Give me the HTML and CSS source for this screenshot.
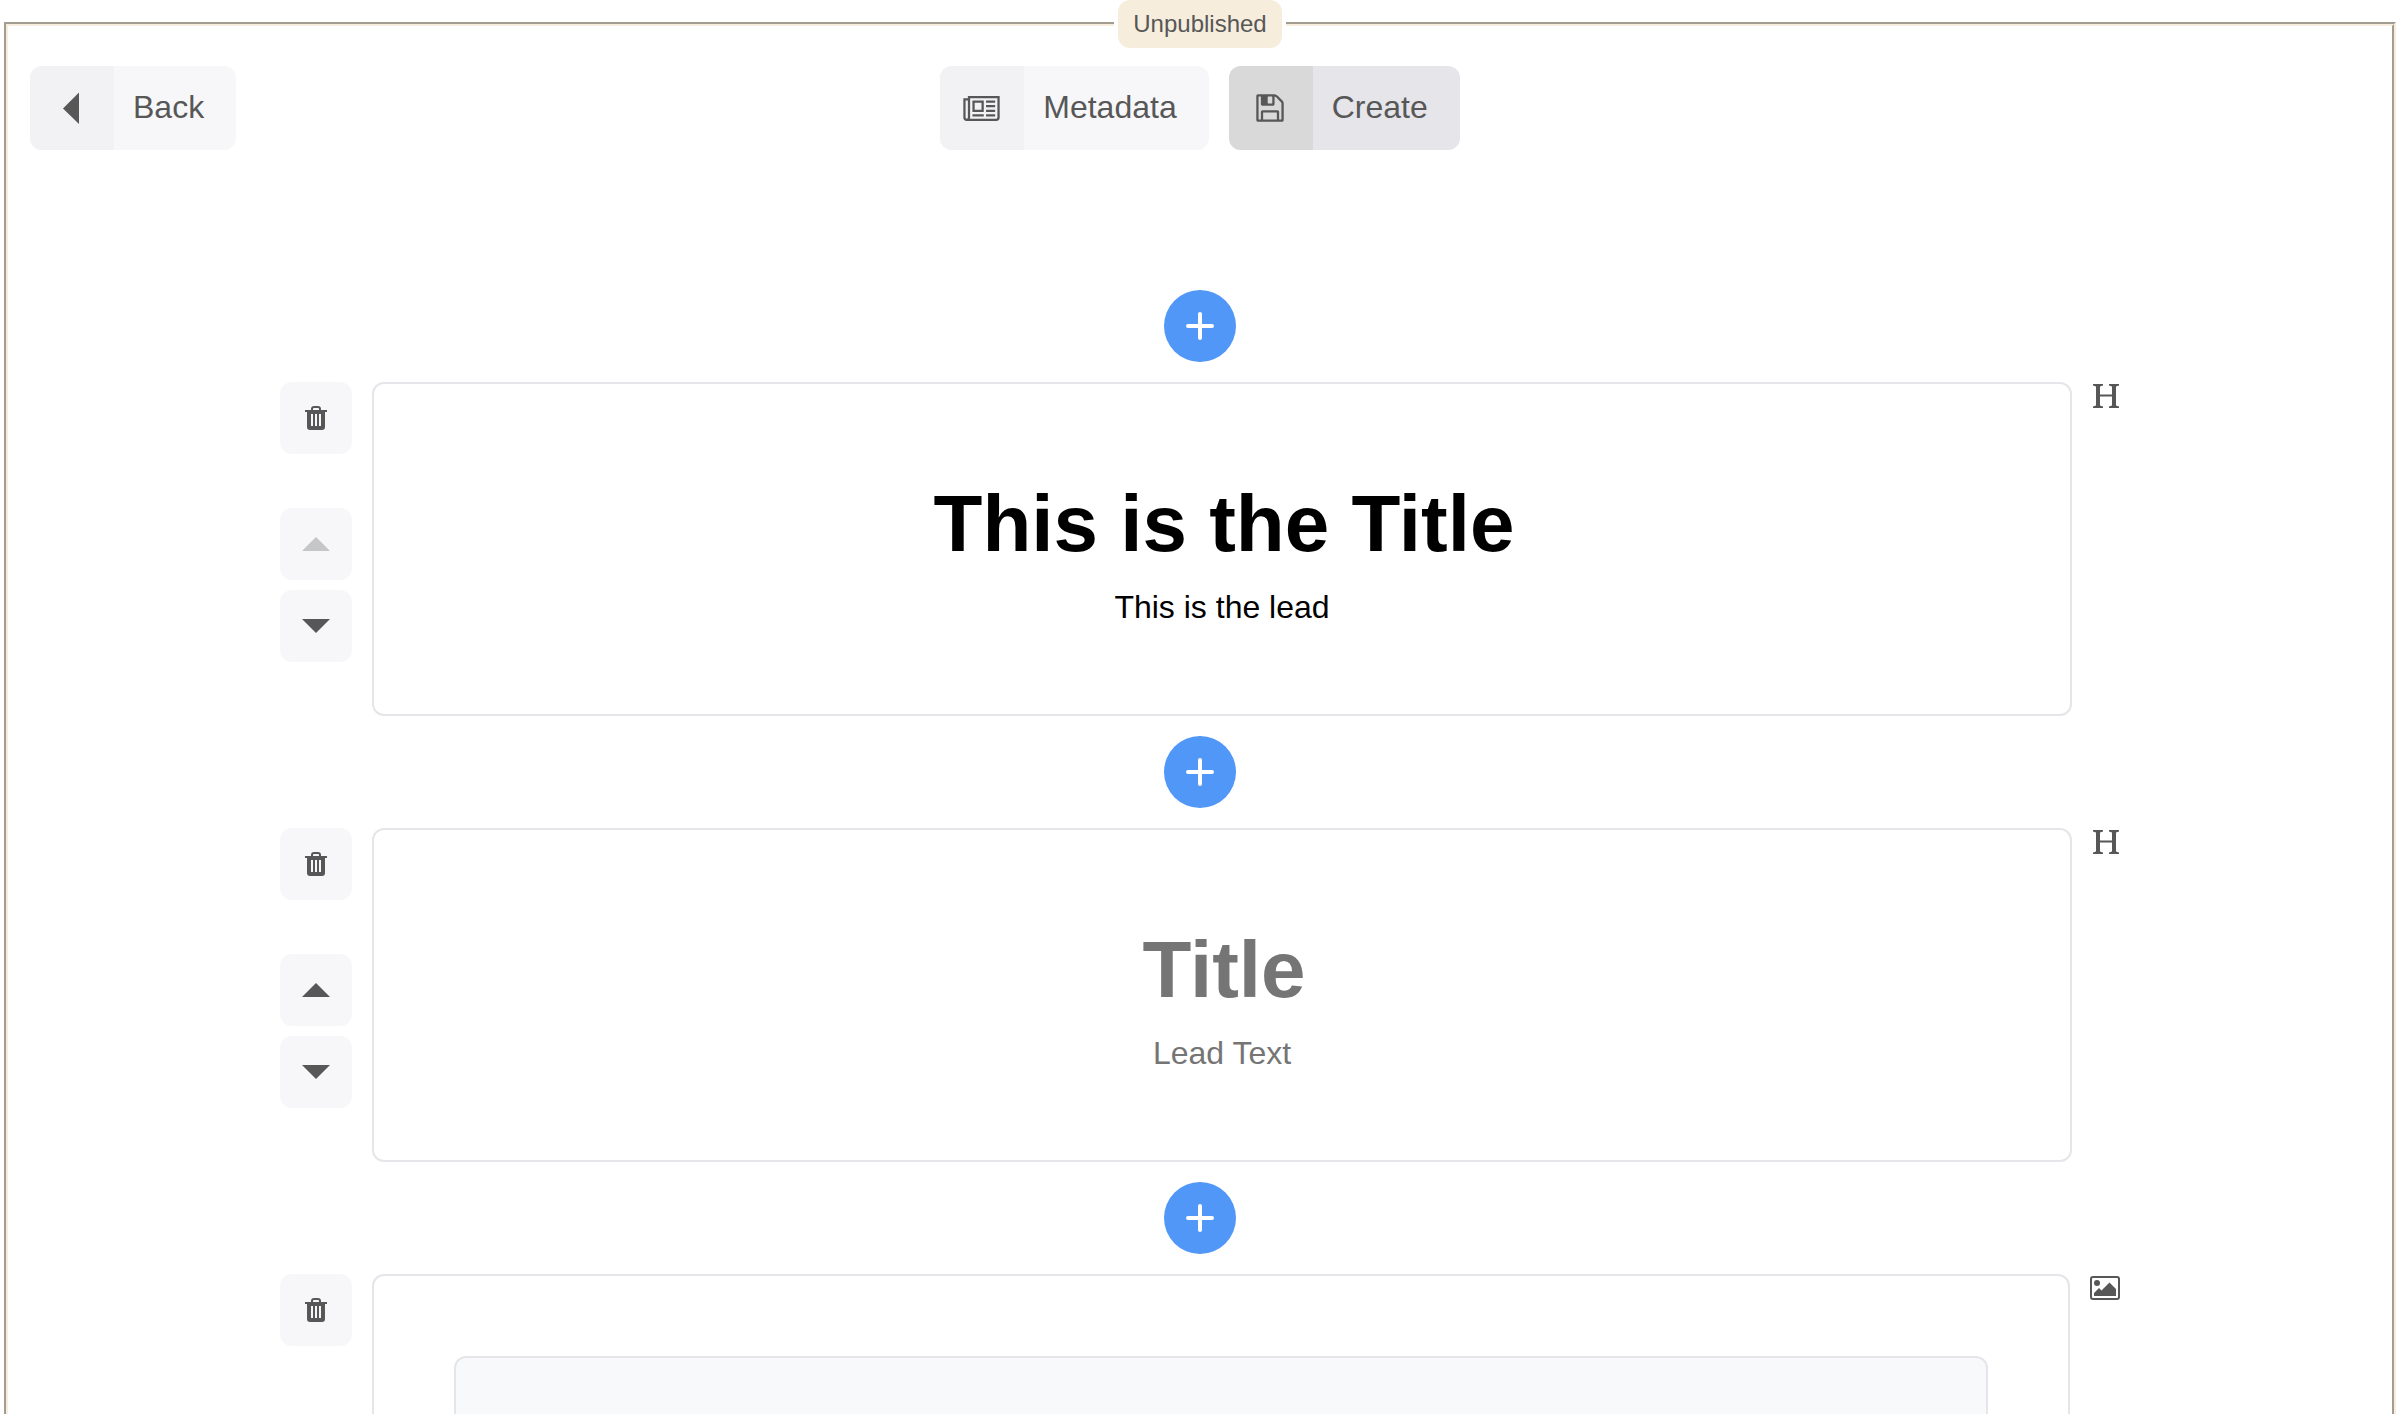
FILE: index.html
```html
<!DOCTYPE html>
<html lang="en">
<head>
<meta charset="utf-8">
<title>Article editor</title>
<link rel="stylesheet" href="styles.css">
</head>
<body>
<svg class="sprite" aria-hidden="true">
  <symbol id="trash" viewBox="0 0 22 24">
    <path fill-rule="evenodd" d="M0 4H6V3Q6 0 9 0H13Q16 0 16 3V4H22V6H20V21Q20 24 17 24H5Q2 24 2 21V6H0ZM8 4H14V3Q14 2 13 2H9Q8 2 8 3ZM6 8V20H8V8ZM10 8V20H12V8ZM14 8V20H16V8Z"/>
  </symbol>
  <symbol id="up" viewBox="0 0 28 14"><path d="M0 14L14 0L28 14Z"/></symbol>
  <symbol id="down" viewBox="0 0 28 14"><path d="M0 0H28L14 14Z"/></symbol>
  <symbol id="plus" viewBox="0 0 28 28"><path d="M14 2V26M2 14H26" fill="none" stroke="currentColor" stroke-width="4" stroke-linecap="round"/></symbol>
  <symbol id="heading" viewBox="0 0 26 24">
    <path d="M0 0H10V1.500L7 2.500V10.500H19V2.500L16 1.500V0H26V1.500L23 2.500V21.500L26 22.500V24H16V22.500L19 21.500V12.500H7V21.500L10 22.500V24H0V22.500L3 21.500V2.500L0 1.500Z"/>
  </symbol>
  <symbol id="picture" viewBox="0 0 30 24">
    <path fill-rule="evenodd" d="M3 0H27Q30 0 30 3V21Q30 24 27 24H3Q0 24 0 21V3Q0 0 3 0ZM3 2Q2 2 2 3V21Q2 22 3 22H27Q28 22 28 21V3Q28 2 27 2Z"/>
    <circle cx="7" cy="7" r="3"/>
    <path d="M4 20V17L9 12L11.500 14.500L19.500 6.500L26 13V20Z"/>
  </symbol>
</svg>

<fieldset class="editor">
  <legend class="status"><span class="status-label">Unpublished</span></legend>

  <header class="toolbar">
    <button class="action" type="button">
      <span class="action-icon"><svg width="16" height="32" viewBox="0 0 16 32"><path d="M0 16.500L16 .5V32Z"/></svg></span>
      <span class="action-text">Back</span>
    </button>
    <div class="actions">
      <button class="action" type="button">
        <span class="action-icon"><svg width="37" height="25" viewBox="0 0 16 11"><path fill-rule="evenodd" d="M2 0H16V9.500A1.500 1.500 0 0 1 14.500 11H1.500A1.500 1.500 0 0 1 0 9.500V1H2ZM1 2V9.500A.5.5 0 0 0 2 9.500V2ZM3 1V9.500Q3 9.800 2.900 10H14.500A.5.5 0 0 0 15 9.500V1ZM4 2H9V7H4ZM5 3V6H8V3ZM4 8H9V9H4ZM10 2H14V3H10ZM10 4H14V5H10ZM10 6H14V7H10ZM10 8H14V9H10Z"/></svg></span>
        <span class="action-text">Metadata</span>
      </button>
      <button class="action primary" type="button">
        <span class="action-icon"><svg width="32" height="32" viewBox="0 0 1792 1792"><path d="M512 1536h768v-384h-768v384zm896 0h128v-896q0-14-10-38.500t-20-34.500l-281-281q-10-10-34-20t-39-10v416q0 40-28 68t-68 28h-576q-40 0-68-28t-28-68v-416h-128v1280h128v-416q0-40 28-68t68-28h832q40 0 68 28t28 68v416zm-384-928v-320q0-13-9.500-22.500t-22.500-9.500h-192q-13 0-22.500 9.500t-9.500 22.500v320q0 13 9.500 22.500t22.500 9.500h192q13 0 22.500-9.500t9.500-22.500zm640 32v928q0 40-28 68t-68 28h-1344q-40 0-68-28t-28-68v-1344q0-40 28-68t68-28h928q40 0 88 20t76 48l280 280q28 28 48 76t20 88z"/></svg></span>
        <span class="action-text">Create</span>
      </button>
    </div>
  </header>

  <main class="blocks">
    <button class="add" type="button" aria-label="Add block"><svg width="28" height="28"><use href="#plus"/></svg></button>

    <section class="block">
      <div class="controls">
        <button class="tool" type="button" aria-label="Delete"><svg width="22" height="24"><use href="#trash"/></svg></button>
        <div class="movers">
          <button class="tool" type="button" aria-label="Move up" disabled><svg width="28" height="14"><use href="#up"/></svg></button>
          <button class="tool" type="button" aria-label="Move down"><svg width="28" height="14"><use href="#down"/></svg></button>
        </div>
      </div>
      <div class="card heading-card">
        <input class="title" type="text" aria-label="Title" placeholder="Title" value="This is the Title">
        <input class="lead" type="text" aria-label="Lead text" placeholder="Lead Text" value="This is the lead">
      </div>
      <svg class="kind" width="28" height="24" role="img" aria-label="Heading"><use href="#heading"/></svg>
    </section>

    <button class="add" type="button" aria-label="Add block"><svg width="28" height="28"><use href="#plus"/></svg></button>

    <section class="block">
      <div class="controls">
        <button class="tool" type="button" aria-label="Delete"><svg width="22" height="24"><use href="#trash"/></svg></button>
        <div class="movers">
          <button class="tool" type="button" aria-label="Move up"><svg width="28" height="14"><use href="#up"/></svg></button>
          <button class="tool" type="button" aria-label="Move down"><svg width="28" height="14"><use href="#down"/></svg></button>
        </div>
      </div>
      <div class="card heading-card">
        <input class="title" type="text" aria-label="Title" placeholder="Title">
        <input class="lead" type="text" aria-label="Lead text" placeholder="Lead Text">
      </div>
      <svg class="kind" width="28" height="24" role="img" aria-label="Heading"><use href="#heading"/></svg>
    </section>

    <button class="add" type="button" aria-label="Add block"><svg width="28" height="28"><use href="#plus"/></svg></button>

    <section class="block">
      <div class="controls">
        <button class="tool" type="button" aria-label="Delete"><svg width="22" height="24"><use href="#trash"/></svg></button>
        <div class="movers">
          <button class="tool" type="button" aria-label="Move up"><svg width="28" height="14"><use href="#up"/></svg></button>
          <button class="tool" type="button" aria-label="Move down"><svg width="28" height="14"><use href="#down"/></svg></button>
        </div>
      </div>
      <div class="card image-card">
        <div class="dropzone"></div>
      </div>
      <svg class="kind" width="30" height="24" role="img" aria-label="Image"><use href="#picture"/></svg>
    </section>
  </main>
</fieldset>
</body>
</html>
```
FILE: styles.css
```css
* { box-sizing: border-box; }

body {
  height: 100vh;
  margin: 0;
  overflow: hidden;
  background: #fff;
  color: #575757;
  font-family: "Liberation Sans", Arial, sans-serif;
  font-size: 32px;
}

button, input { font: inherit; color: inherit; }
button { border: 0; padding: 0; cursor: pointer; }
svg { display: block; fill: currentColor; }
.sprite { display: none; }

.editor {
  margin: 0 4px;
  padding: 18px 22px 40px;
  border: 4px groove #f6eddd;
}

.status {
  margin: 0 auto;
  padding: 0 4px;
}

.status-label {
  display: block;
  padding: 0 15px;
  border-radius: 12px;
  background: #f6eddd;
  font-size: 24px;
  line-height: 48px;
}

.toolbar {
  display: grid;
  grid-template-columns: 1fr auto 1fr;
  justify-items: start;
}

.actions { display: flex; gap: 20px; }

.action {
  display: flex;
  overflow: hidden;
  border-radius: 12px;
  background: #f7f7fa;
  line-height: 82px;
}

.action-icon {
  display: flex;
  align-items: center;
  justify-content: center;
  width: 84px;
  height: 84px;
  padding-right: 2px;
  background: #f2f2f5;
}

.action-text { padding: 0 32px 0 19px; }

.primary { background: #e5e5ea; }
.primary .action-icon { background: #d9d9d9; }

.blocks {
  display: flex;
  flex-direction: column;
  gap: 20px;
  max-width: 1840px;
  margin: 140px auto 0;
}

.add {
  display: flex;
  align-items: center;
  justify-content: center;
  align-self: center;
  width: 72px;
  height: 72px;
  border-radius: 50%;
  background: #5197f8;
  color: #fff;
}

.block { display: flex; gap: 20px; }

.controls { display: flex; flex-direction: column; }

.movers {
  display: flex;
  flex-direction: column;
  gap: 10px;
  margin: auto 0;
}

.tool {
  display: flex;
  align-items: center;
  justify-content: center;
  width: 72px;
  height: 72px;
  border-radius: 12px;
  background: #f7f7fa;
}

.tool:disabled { color: #c5c6c7; }

.card {
  flex: 1;
  min-width: 0;
  border: 2px solid #e5e5ea;
  border-radius: 12px;
}

.heading-card {
  display: flex;
  flex-direction: column;
  gap: 16px;
  padding: 92px 80px 88px;
}

.title, .lead {
  width: 100%;
  padding: 0;
  border: 0;
  background: none;
  color: #000;
  text-align: center;
}

.title {
  height: 96px;
  padding-left: 4px;
  font-size: 80px;
  font-weight: bold;
}

.lead { height: 38px; }

.title::placeholder, .lead::placeholder { color: #757575; }

.image-card { padding: 80px; }

.dropzone {
  height: 600px;
  border: 2px solid #e5e5ea;
  border-radius: 12px;
  background: #f7f9fb;
}

.kind { flex: none; margin-top: 2px; }
```
